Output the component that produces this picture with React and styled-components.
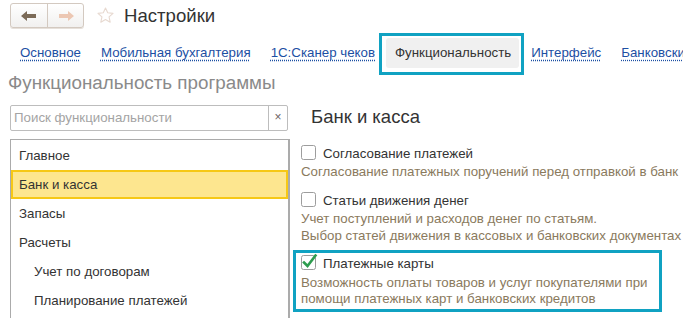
import styled, { createGlobalStyle } from "styled-components";

const GlobalStyle = createGlobalStyle`
  html, body {
    margin: 0;
    padding: 0;
    background: #fff;
  }
  * {
    box-sizing: border-box;
  }
`;

const tabs = [
  { label: "Основное" },
  { label: "Мобильная бухгалтерия" },
  { label: "1С:Сканер чеков" },
  { label: "Функциональность", active: true },
  { label: "Интерфейс" },
  { label: "Банковские программы" },
];

const sections = [
  { label: "Главное" },
  { label: "Банк и касса", selected: true },
  { label: "Запасы" },
  { label: "Расчеты" },
  { label: "Учет по договорам", nested: true },
  { label: "Планирование платежей", nested: true },
];

const options = [
  {
    label: "Согласование платежей",
    text: ["Согласование платежных поручений перед отправкой в банк"],
  },
  {
    label: "Статьи движения денег",
    text: [
      "Учет поступлений и расходов денег по статьям.",
      "Выбор статей движения в кассовых и банковских документах",
    ],
  },
  {
    label: "Платежные карты",
    checked: true,
    marked: true,
    text: [
      "Возможность оплаты товаров и услуг покупателями при",
      "помощи платежных карт и банковских кредитов",
    ],
  },
];

export default function App() {
  return (
    <Page>
      <GlobalStyle />
      <Header>
        <NavGroup>
          <NavButton>
            <Arrow dir="left" color="#7b6a57" />
          </NavButton>
          <NavButton $last>
            <Arrow dir="right" color="#ecc7b3" />
          </NavButton>
        </NavGroup>
        <Star />
        <Title>Настройки</Title>
      </Header>

      <TabBar>
        {tabs.map((t) => (
          <Tab key={t.label} $active={t.active}>
            {t.label}
          </Tab>
        ))}
      </TabBar>

      <Body>
        <LeftPanel>
          <PanelTitle>Функциональность программы</PanelTitle>
          <Search>
            <SearchText>Поиск функциональности</SearchText>
            <ClearButton>×</ClearButton>
          </Search>
          <SectionList>
            {sections.map((s) => (
              <SectionItem key={s.label} $selected={s.selected} $nested={s.nested}>
                {s.label}
              </SectionItem>
            ))}
          </SectionList>
        </LeftPanel>

        <RightPanel>
          <GroupTitle>Банк и касса</GroupTitle>
          {options.map((o, i) => (
            <Option key={o.label} $marked={o.marked} $gap={[15, 10, 6][i]}>
              <OptionRow>
                <CheckBox checked={o.checked} />
                <OptionLabel>{o.label}</OptionLabel>
              </OptionRow>
              <OptionText $tight={o.marked}>
                {o.text.map((line) => (
                  <div key={line}>{line}</div>
                ))}
              </OptionText>
            </Option>
          ))}
        </RightPanel>
      </Body>
    </Page>
  );
}

function Arrow({ dir, color }) {
  return (
    <svg width="18" height="12" viewBox="0 0 18 12">
      <g transform={dir === "right" ? "translate(18 0) scale(-1 1)" : undefined}>
        <path d="M1 6 L7 1 L7 4 L16 4 L16 8 L7 8 L7 11 Z" fill={color} />
      </g>
    </svg>
  );
}

function Star() {
  return (
    <StarIcon width="19" height="19" viewBox="0 0 24 24">
      <path
        d="M12 2.5 L14.8 8.6 L21.5 9.3 L16.5 13.8 L17.9 20.4 L12 17 L6.1 20.4 L7.5 13.8 L2.5 9.3 L9.2 8.6 Z"
        fill="none"
        stroke="#e7d9d0"
        strokeWidth="1.4"
        strokeLinejoin="round"
      />
    </StarIcon>
  );
}

function CheckBox({ checked }) {
  return (
    <CheckIcon width="17" height="17" viewBox="0 0 17 17">
      <rect x="0.5" y="2.5" width="14" height="14" rx="2" fill="#fff" stroke="#9d9d9d" />
      {checked && (
        <path
          d="M3 9.5 L6.5 13 L14.5 2.5"
          fill="none"
          stroke="#2e9c4f"
          strokeWidth="2.6"
          strokeLinecap="square"
        />
      )}
    </CheckIcon>
  );
}

const Page = styled.div`
  width: 683px;
  height: 318px;
  overflow: hidden;
  font-family: "Liberation Sans", Arial, sans-serif;
  font-size: 13.3px;
  color: #333;
`;

const Header = styled.div`
  display: flex;
  align-items: center;
  height: 33px;
  padding: 0 10px 2px;
`;

const NavGroup = styled.div`
  display: flex;
  height: 25px;
  border: 1px solid #d3c9c0;
  border-radius: 3px;
  background: linear-gradient(#ffffff, #f1f0ef);
  box-shadow: 0 1px 0 #e6e0da;
`;

const NavButton = styled.div`
  width: ${(p) => (p.$last ? 35 : 37)}px;
  display: flex;
  align-items: center;
  justify-content: center;
  border-right: ${(p) => (p.$last ? "none" : "1px solid #d3c9c0")};
`;

const StarIcon = styled.svg`
  margin-left: 12px;
`;

const Title = styled.div`
  margin-left: 9px;
  font-size: 18.6px;
  color: #333;
`;

const TabBar = styled.div`
  display: flex;
  height: 42px;
  padding: 5px 0 0 11px;
  white-space: nowrap;
`;

const Tab = styled.div`
  position: relative;
  height: 30px;
  line-height: 30px;
  padding: 0 8px 0 9px;
  margin-right: 3px;
  border-radius: 3px;
  color: ${(p) => (p.$active ? "#333" : "#1c4fa3")};
  background: ${(p) => (p.$active ? "#f0f0f0" : "transparent")};
  text-decoration: ${(p) => (p.$active ? "none" : "underline dotted #1c4fa3")};
  text-underline-offset: 3px;

  &::after {
    content: "";
    display: ${(p) => (p.$active ? "block" : "none")};
    position: absolute;
    top: -5px;
    bottom: -7px;
    left: -7px;
    right: -5px;
    border: 3px solid #10a2c2;
  }
`;

const Body = styled.div`
  display: flex;
`;

const LeftPanel = styled.div`
  width: 282px;
  margin-left: 8px;
`;

const PanelTitle = styled.div`
  margin-top: -2px;
  font-size: 18.8px;
  line-height: 20px;
  color: #8a8a8a;
  white-space: nowrap;
`;

const Search = styled.div`
  display: flex;
  margin: 12px 0 0 2px;
  width: 278px;
  height: 26px;
  border: 1px solid #bdbdbd;
  border-radius: 2px;
`;

const SearchText = styled.div`
  flex: 1;
  padding-left: 3px;
  line-height: 24px;
  color: #a4a4a4;
`;

const ClearButton = styled.div`
  width: 19px;
  border-left: 1px solid #bdbdbd;
  text-align: center;
  line-height: 23px;
  font-size: 12px;
  color: #6e6464;
`;

const SectionList = styled.div`
  margin: 8px 0 0 2px;
  width: 280px;
  height: 200px;
  padding-top: 1px;
  border: 1px solid #ababab;
  border-right-width: 2px;
`;

const SectionItem = styled.div`
  height: 29px;
  line-height: ${(p) => (p.$selected ? 25 : 29)}px;
  color: #333;
  background: ${(p) => (p.$selected ? "#fde68f" : "transparent")};
  border: ${(p) => (p.$selected ? "2px solid #f6c816" : "none")};
  padding-left: ${(p) => (p.$nested ? 23 : p.$selected ? 6 : 8)}px;
  white-space: nowrap;
`;

const RightPanel = styled.div`
  flex: 1;
  padding-left: 3px;
`;

const GroupTitle = styled.div`
  margin-top: 31px;
  padding-left: 18px;
  font-size: 18.5px;
  line-height: 22px;
  color: #333;
`;

const Option = styled.div`
  margin-top: ${(p) => p.$gap}px;
  width: ${(p) => (p.$marked ? "369px" : "auto")};
  padding: ${(p) => (p.$marked ? "0 5px 2px" : "0 0 0 8px")};
  border: ${(p) => (p.$marked ? "3px solid #10a2c2" : "none")};
  white-space: nowrap;
`;

const OptionRow = styled.div`
  display: flex;
  align-items: center;
  height: 20px;
`;

const CheckIcon = styled.svg`
  margin-top: -3px;
`;

const OptionLabel = styled.span`
  margin-left: 5px;
  color: #333;
`;

const OptionText = styled.div`
  margin-top: ${(p) => (p.$tight ? 2 : 0)}px;
  line-height: ${(p) => (p.$tight ? 16 : 17)}px;
  color: #8a7a5d;
`;
